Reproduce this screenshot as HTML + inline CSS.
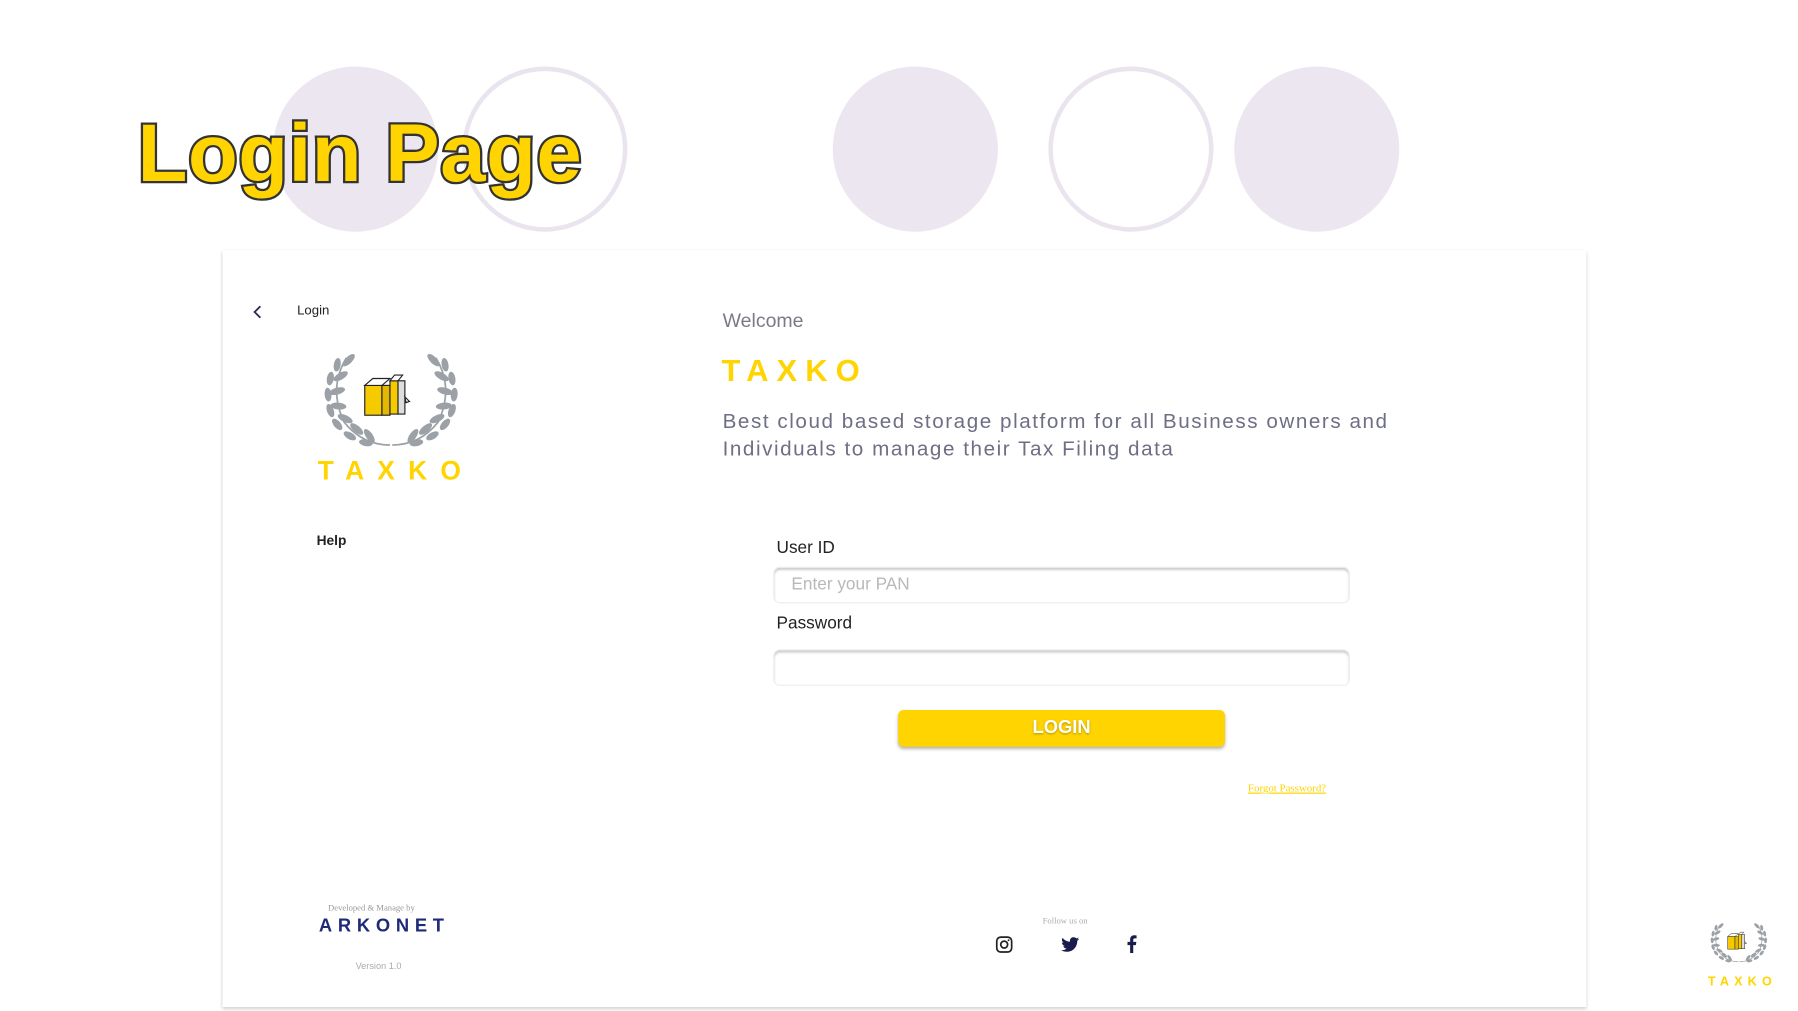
<!DOCTYPE html>
<html><head><meta charset="utf-8"><style>
html,body{margin:0;padding:0;background:#fff;width:1798px;height:1011px;overflow:hidden}
#s{position:absolute;left:0;top:0;width:1560px;height:877px;transform:scale(1.147);transform-origin:0 0;font-family:"Liberation Sans",sans-serif}
.a{position:absolute;white-space:nowrap}
.c{position:absolute;width:144px;height:144px;border-radius:50%;box-sizing:border-box}
.f{background:#ECE6F1}
.r{border:4px solid #EAE4EF;background:#fff}
</style></head><body>
<svg width="0" height="0" style="position:absolute">
<defs>
<g id="half">
<g fill="#9BA1A6">
<ellipse cx="22" cy="6" rx="7" ry="3" transform="rotate(-45 22 6)"/>
<ellipse cx="12" cy="10" rx="6" ry="3" transform="rotate(-80 12 10)"/>
<ellipse cx="15" cy="20" rx="7" ry="3" transform="rotate(-30 15 20)"/>
<ellipse cx="6" cy="22" rx="6" ry="3" transform="rotate(-80 6 22)"/>
<ellipse cx="12" cy="33" rx="7" ry="3" transform="rotate(-15 12 33)"/>
<ellipse cx="4" cy="36" rx="6" ry="3" transform="rotate(-95 4 36)"/>
<ellipse cx="13" cy="46" rx="7" ry="3" transform="rotate(5 13 46)"/>
<ellipse cx="6" cy="50" rx="6" ry="3" transform="rotate(-110 6 50)"/>
<ellipse cx="19" cy="57" rx="7" ry="3" transform="rotate(25 19 57)"/>
<ellipse cx="12" cy="62" rx="6" ry="3" transform="rotate(-130 12 62)"/>
<ellipse cx="29" cy="66" rx="7" ry="3" transform="rotate(40 29 66)"/>
<ellipse cx="23" cy="72" rx="6" ry="3" transform="rotate(-150 23 72)"/>
<ellipse cx="40" cy="72" rx="7" ry="3" transform="rotate(55 40 72)"/>
<ellipse cx="37" cy="78" rx="6" ry="3" transform="rotate(-170 37 78)"/>
</g>
<path d="M20 4 Q4 30 18 60 Q34 80 58 80" fill="none" stroke="#9BA1A6" stroke-width="1.5"/>
</g>
<g id="logo">
<use href="#half"/>
<use href="#half" transform="translate(118 0) scale(-1 1)"/>
<g stroke="#222" stroke-width="1">
<rect x="36" y="28" width="15" height="26" fill="#F5CB00"/>
<polygon points="36,28 43,22 58,22 51,28" fill="#fff"/>
<rect x="51" y="28" width="7" height="26" fill="#E2B800"/>
<rect x="58" y="24" width="7" height="29" fill="#F5CB00"/>
<polygon points="58,24 62,19 69,19 65,24" fill="#fff"/>
<rect x="65" y="24" width="6" height="29" fill="#ddd"/>
<path d="M71 38 l4 4 -3 1z" fill="#fff"/>
</g>
</g>
</defs></svg>
<div id="s">
<div class="c f" style="left:238px;top:58px"></div>
<div class="c r" style="left:403px;top:58px"></div>
<div class="c f" style="left:726px;top:58px"></div>
<div class="c r" style="left:914px;top:58px"></div>
<div class="c f" style="left:1076px;top:58px"></div>
<div class="a" style="left:120px;top:94px;font-size:71px;font-weight:bold;color:#FFD400;-webkit-text-stroke:4px #333;paint-order:stroke fill;letter-spacing:0.5px">Login Page</div>

<div class="a" style="left:194px;top:218px;width:1189px;height:660px;background:#fff;box-shadow:0 2px 3px rgba(0,0,0,.18),-1px 0 2px rgba(0,0,0,.05)"></div>

<svg class="a" style="left:220px;top:266px" width="10" height="12"><path d="M7 1 L2 6 L7 11" fill="none" stroke="#2a2a55" stroke-width="1.6"/></svg>
<div class="a" style="left:259px;top:265px;font-size:11.5px;color:#222">Login</div>
<svg class="a" style="left:282px;top:308px" width="118" height="82" viewBox="0 0 118 82"><use href="#logo"/></svg>
<div class="a" style="left:277px;top:397px;font-size:23px;font-weight:bold;color:#FFD400;letter-spacing:11.5px">TAXKO</div>
<div class="a" style="left:276px;top:464px;font-size:12px;font-weight:bold;color:#222">Help</div>

<div class="a" style="left:630px;top:270px;font-size:17px;color:#7a7a88">Welcome</div>
<div class="a" style="left:629px;top:308px;font-size:27px;font-weight:bold;color:#FFD400;letter-spacing:7px">TAXKO</div>
<div class="a" style="left:630px;top:355px;font-size:18px;line-height:24px;color:#6e6e84;letter-spacing:1.35px">Best cloud based storage platform for all Business owners and<br>Individuals to manage their Tax Filing data</div>

<div class="a" style="left:677px;top:469px;font-size:15px;color:#222">User ID</div>
<div class="a" style="left:674px;top:494px;width:503px;height:32px;border-radius:6px;box-shadow:inset 0 2px 2px rgba(0,0,0,.2);border:1px solid #eee;box-sizing:border-box"></div>
<div class="a" style="left:690px;top:501px;font-size:15px;color:#b8b8b8">Enter your PAN</div>
<div class="a" style="left:677px;top:535px;font-size:15px;color:#222">Password</div>
<div class="a" style="left:674px;top:566px;width:503px;height:32px;border-radius:6px;box-shadow:inset 0 2px 2px rgba(0,0,0,.2);border:1px solid #eee;box-sizing:border-box"></div>
<div class="a" style="left:783px;top:619px;width:285px;height:32px;border-radius:5px;background:#FFD400;box-shadow:0 2px 3px rgba(0,0,0,.3);color:#fff;font-weight:bold;font-size:16px;text-align:center;line-height:32px;text-shadow:0 1px 2px rgba(0,0,0,.3)">LOGIN</div>
<div class="a" style="left:1088px;top:683px;font-size:9.5px;font-family:'Liberation Serif',serif;color:#FFD400;text-decoration:underline">Forgot Password?</div>

<div class="a" style="left:286px;top:787px;font-size:7.5px;font-family:'Liberation Serif',serif;color:#999">Developed &amp; Manage by</div>
<div class="a" style="left:278px;top:799px;font-size:16px;font-weight:bold;color:#1e2a78;letter-spacing:5px">ARKONET</div>
<div class="a" style="left:310px;top:838px;font-size:8px;color:#aaa">Version 1.0</div>

<div class="a" style="left:909px;top:798px;font-size:7.5px;font-family:'Liberation Serif',serif;color:#aaa">Follow us on</div>
<svg class="a" style="left:868px;top:816px" width="15" height="15" viewBox="0 0 15 15"><rect x="1" y="1" width="13" height="13" rx="3.5" fill="none" stroke="#222" stroke-width="1.5"/><circle cx="7.5" cy="7.5" r="3" fill="none" stroke="#222" stroke-width="1.5"/><circle cx="11.3" cy="3.7" r=".8" fill="#222"/></svg>
<svg class="a" style="left:925px;top:817px" width="16" height="13" viewBox="0 0 24 20"><path d="M24 2.4c-.9.4-1.8.6-2.8.8 1-.6 1.8-1.6 2.2-2.7-1 .6-2 1-3.1 1.2C19.3.7 18 .1 16.6.1c-2.7 0-4.9 2.2-4.9 4.9 0 .4 0 .8.1 1.1C7.7 5.9 4.1 4 1.7 1 1.2 1.7 1 2.6 1 3.5c0 1.7.9 3.2 2.2 4.1-.8 0-1.6-.2-2.2-.6v.1c0 2.4 1.7 4.4 3.9 4.8-.4.1-.8.2-1.3.2-.3 0-.6 0-.9-.1.6 2 2.4 3.4 4.6 3.4-1.7 1.3-3.8 2.1-6.1 2.1H0c2.2 1.4 4.8 2.2 7.5 2.2 9.1 0 14-7.5 14-14v-.6c1-.7 1.8-1.6 2.5-2.6z" fill="#1b1b4d"/></svg>
<svg class="a" style="left:982px;top:815px" width="9" height="16" viewBox="0 0 9 16"><path d="M6 16V9h2.3l.4-2.8H6V4.5c0-.8.3-1.4 1.4-1.4H9V.6C8.6.5 7.8.4 6.9.4 4.8.4 3.3 1.7 3.3 4v2.2H1V9h2.3v7z" fill="#1b1b4d"/></svg>

<svg class="a" style="left:1491px;top:802px" width="50" height="40" viewBox="0 0 118 82"><use href="#logo"/></svg>
<div class="a" style="left:1489px;top:850px;font-size:11px;font-weight:bold;color:#FFD400;letter-spacing:4.5px">TAXKO</div>
</div>
</body></html>
